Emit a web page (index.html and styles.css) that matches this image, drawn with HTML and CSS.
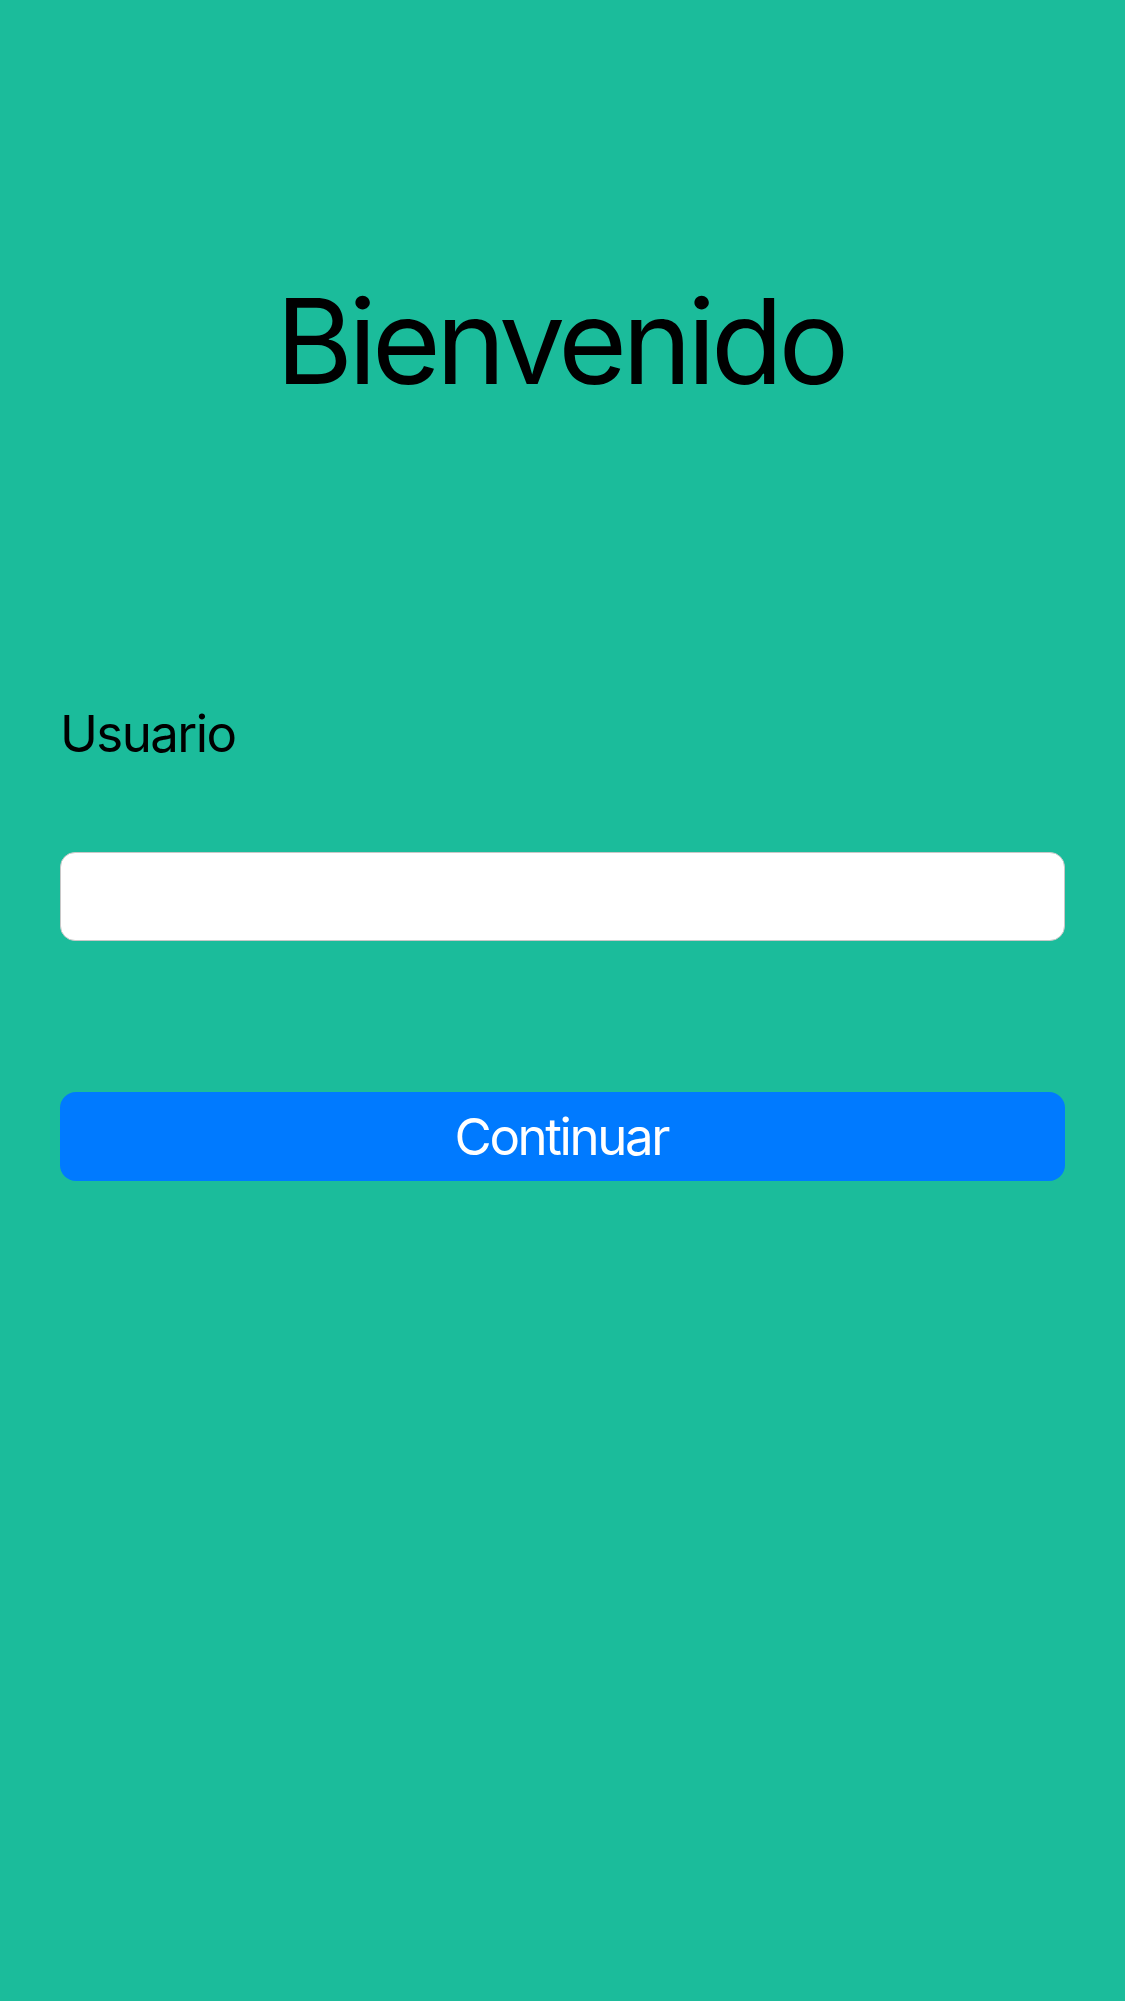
FILE: index.html
```html
<!DOCTYPE html>
<html lang="es">
<head>
<meta charset="utf-8">
<title>Bienvenido</title>
<link rel="stylesheet" href="styles.css">
</head>
<body>
<main class="screen">
  <h1 class="title">Bienvenido</h1>
  <form class="form" onsubmit="return false">
    <label class="label" for="usuario">Usuario</label>
    <input class="input" id="usuario" type="text">
    <button class="button" type="button">Continuar</button>
  </form>
</main>
</body>
</html>
```
FILE: styles.css
```css
html, body {
  margin: 0;
  padding: 0;
}
body {
  background: #1bbc9b;
  font-family: Inter, "Noto Sans", "Liberation Sans", sans-serif;
  color: #000;
}
.screen {
  min-height: 2001px;
  box-sizing: border-box;
  padding: 282px 60px 0;
  display: flex;
  flex-direction: column;
}
.title {
  margin: 0;
  font-size: 118px;
  font-weight: 400;
  line-height: 118px;
  letter-spacing: -4.8px;
  text-indent: -4.8px;
  text-align: center;
}
.form {
  display: flex;
  flex-direction: column;
  margin-top: 308px;
}
.label {
  font-size: 51px;
  line-height: 51px;
  height: 51px;
  letter-spacing: -1.6px;
}
.input {
  margin: 93px 0 0;
  height: 89px;
  box-sizing: border-box;
  border: 1.5px solid #c8c8c8;
  border-radius: 15px;
  background: #fff;
  padding: 0 20px;
  font: inherit;
  font-size: 51px;
  outline: none;
}
.button {
  margin: 151px 0 0;
  height: 89px;
  border: none;
  border-radius: 16px;
  background: #007aff;
  color: #fff;
  font: inherit;
  font-size: 51px;
  line-height: 89px;
  letter-spacing: -2.4px;
  padding: 0 2.4px 0 0;
  display: flex;
  align-items: center;
  justify-content: center;
}
```
